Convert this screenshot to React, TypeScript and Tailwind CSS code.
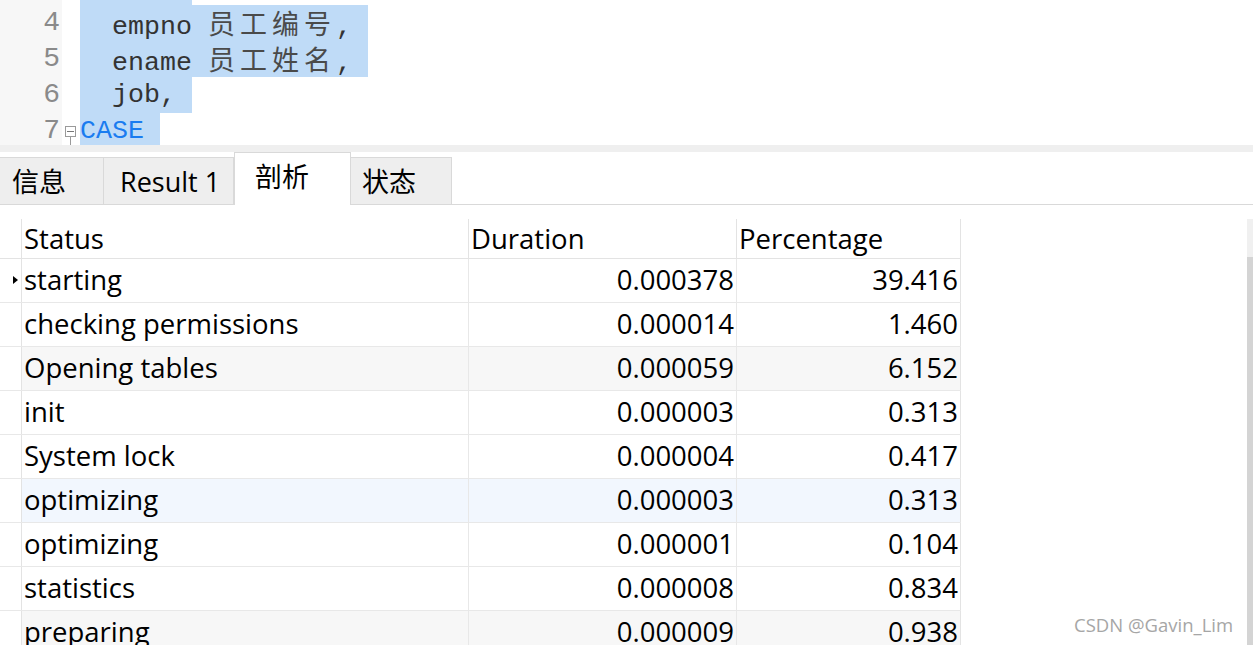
import React from 'react';

// Editor lines (char cells are 16px wide, CJK cells 32px)
type Seg = { t: string; cjk?: boolean };

const CODE_FONT = { fontFamily: '"Liberation Mono", "Noto Sans CJK SC", monospace' };
const UI_FONT = { fontFamily: '"Open Sans", "Noto Sans CJK SC", sans-serif' };

const CodeText: React.FC<{ segs: Seg[] }> = ({ segs }) => (
  <>
    {segs.map((s, i) =>
      s.cjk ? (
        s.t.split('').map((c, j) => (
          <span key={`${i}-${j}`} className="inline-block w-[32px] text-[27px] text-[#4a4a4a]" style={{ fontFamily: '"Noto Sans CJK SC", sans-serif' }}>
            {c}
          </span>
        ))
      ) : (
        <span key={i} className="whitespace-pre">{s.t}</span>
      )
    )}
  </>
);

const rows = [
  { status: 'starting', duration: '0.000378', pct: '39.416', bg: 'bg-white', current: true },
  { status: 'checking permissions', duration: '0.000014', pct: '1.460', bg: 'bg-white' },
  { status: 'Opening tables', duration: '0.000059', pct: '6.152', bg: 'bg-[#f7f7f7]' },
  { status: 'init', duration: '0.000003', pct: '0.313', bg: 'bg-white' },
  { status: 'System lock', duration: '0.000004', pct: '0.417', bg: 'bg-white' },
  { status: 'optimizing', duration: '0.000003', pct: '0.313', bg: 'bg-[#f2f7fe]' },
  { status: 'optimizing', duration: '0.000001', pct: '0.104', bg: 'bg-white' },
  { status: 'statistics', duration: '0.000008', pct: '0.834', bg: 'bg-white' },
  { status: 'preparing', duration: '0.000009', pct: '0.938', bg: 'bg-[#f7f7f7]' },
];

const tabs = [
  { label: '信息', w: 'w-[104px]', pl: 'pl-[12px]' },
  { label: 'Result 1', w: 'w-[130px]', pl: 'pl-[16px]' },
  { label: '剖析', w: 'w-[117px]', pl: 'pl-[20px]', active: true },
  { label: '状态', w: 'w-[101px]', pl: 'pl-[11px]' },
];

const App: React.FC = () => {
  const lines: { n: string; segs: Seg[]; cells: number; fold?: boolean; blue?: boolean }[] = [
    { n: '4', segs: [{ t: '  empno ' }, { t: '员工编号', cjk: true }, { t: ',' }], cells: 18 },
    { n: '5', segs: [{ t: '  ename ' }, { t: '员工姓名', cjk: true }, { t: ',' }], cells: 18 },
    { n: '6', segs: [{ t: '  job,' }], cells: 7 },
    { n: '7', segs: [{ t: 'CASE' }], cells: 5, fold: true, blue: true },
  ];

  return (
    <div className="relative w-[1253px] h-[645px] overflow-hidden bg-white">
      {/* Editor */}
      <div className="h-[145px] overflow-hidden text-[26.67px] leading-[36px] text-[#333333]" style={CODE_FONT}>
        <div className="flex h-[5px]">
          <div className="w-[62px] bg-[#f7f7f7]" />
          <div className="w-[18px]" />
          <div className="w-[112px] bg-[#bfdbf7]" />
        </div>
        {lines.map((l) => (
          <div key={l.n} className="flex h-[36px]">
            <div className="w-[62px] bg-[#f7f7f7] pr-[2px] text-right text-[28px] text-[#8a8a8a]">{l.n}</div>
            <div className="relative w-[18px]">
              {l.fold && (
                <>
                  <div className="absolute left-[3px] top-[13px] flex h-[11px] w-[11px] items-center justify-center border border-[#9a9a9a] bg-white">
                    <div className="h-px w-[7px] bg-[#777]" />
                  </div>
                  <div className="absolute left-[8px] top-[24px] h-[14px] w-px bg-[#9a9a9a]" />
                </>
              )}
            </div>
            <div
              className={`h-[36px] bg-[#bfdbf7] ${l.blue ? 'text-[#1a7cf0]' : ''}`}
              style={{ width: l.cells * 16 }}
            >
              <CodeText segs={l.segs} />
            </div>
          </div>
        ))}
      </div>

      <div className="h-[7px] bg-[#efefef]" />

      {/* Tabs */}
      <div className="flex h-[53px] items-end border-b border-[#d9d9d9] text-[27px] text-black" style={UI_FONT}>
        {tabs.map((t, i) =>
          t.active ? (
            <div key={t.label} className={`${t.w} ${t.pl} -mb-px h-[53px] border border-b-0 border-[#d9d9d9] bg-white pt-[6px] leading-[36px]`}>
              {t.label}
            </div>
          ) : (
            <div
              key={t.label}
              className={`${t.w} ${t.pl} h-[47px] border-t border-r border-[#d9d9d9] bg-[#eeeeee] pt-[6px] leading-[36px] ${i === 0 ? '' : 'border-l-0'}`}
            >
              {t.label}
            </div>
          )
        )}
      </div>

      {/* Table */}
      <div className="mt-[14px] flex">
        <div className="w-[961px] text-[27.5px] text-black" style={UI_FONT}>
          <div className="flex h-[40px] border-b border-[#e3e3e3] leading-[40px]">
            <div className="w-[22px] border-r border-[#e3e3e3]" />
            <div className="w-[447px] border-r border-[#e3e3e3] pl-[2px]">Status</div>
            <div className="w-[268px] border-r border-[#e3e3e3] pl-[2px]">Duration</div>
            <div className="w-[224px] border-r border-[#e3e3e3] pl-[2px]">Percentage</div>
          </div>
          {rows.map((r, i) => (
            <div key={i} className={`flex h-[44px] border-b border-[#e8e8e8] leading-[42px] ${r.bg}`}>
              <div className="relative w-[22px] border-r border-[#e3e3e3] bg-white">
                {r.current && (
                  <div className="absolute left-[13px] top-[17px] h-0 w-0 border-y-[4px] border-l-[5px] border-y-transparent border-l-black" />
                )}
              </div>
              <div className="w-[447px] border-r border-[#e8e8e8] pl-[2px]">{r.status}</div>
              <div className="w-[268px] border-r border-[#e8e8e8] pr-[2px] text-right">{r.duration}</div>
              <div className="w-[224px] border-r border-[#e3e3e3] pr-[2px] text-right">{r.pct}</div>
            </div>
          ))}
        </div>
        <div className="flex-1" />
        <div className="flex h-[440px] w-[6px] flex-col">
          <div className="h-[38px] bg-[#f0f0f0]" />
          <div className="flex-1 bg-[#d4d4d4]" />
        </div>
      </div>

      {/* Watermark */}
      <div
        className="absolute left-[1074px] top-[612px] text-[18.5px] leading-[26px] text-[#a6a6a6]"
        style={{ fontFamily: '"Open Sans", sans-serif' }}
      >
        CSDN @Gavin_Lim
      </div>
    </div>
  );
};

export default App;
